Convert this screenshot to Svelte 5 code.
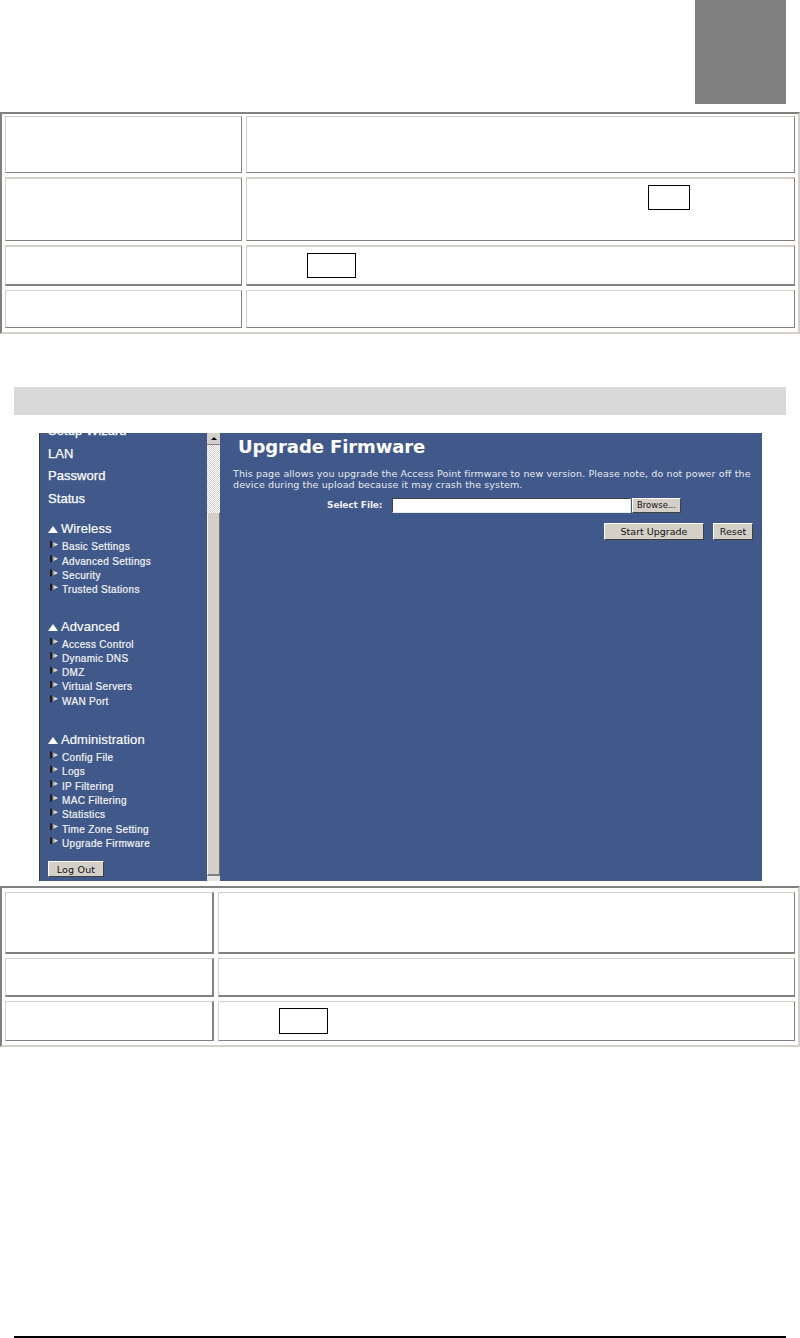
<script>
  const wireless = ['Basic Settings', 'Advanced Settings', 'Security', 'Trusted Stations'];
  const advanced = ['Access Control', 'Dynamic DNS', 'DMZ', 'Virtual Servers', 'WAN Port'];
  const admin = ['Config File', 'Logs', 'IP Filtering', 'MAC Filtering', 'Statistics', 'Time Zone Setting', 'Upgrade Firmware'];
</script>

<div class="page">
  <div class="tab-row"><div class="tab"></div></div>

  <div class="table t1">
    <div class="cell c-a r1"></div>
    <div class="cell r1"></div>
    <div class="cell c-a r2 thicktop"></div>
    <div class="cell r2 thicktop key-right"><span class="key k1"></span></div>
    <div class="cell c-a r3 thicktop thickbot"></div>
    <div class="cell r3 thicktop thickbot key-left"><span class="key k2"></span></div>
    <div class="cell c-a r4"></div>
    <div class="cell r4"></div>
  </div>

  <div class="band"></div>

  <div class="screen">
    <div class="side">
      <div class="side-inner">
        <div class="top">Setup Wizard</div>
        <div class="top">LAN</div>
        <div class="top">Password</div>
        <div class="top">Status</div>

        <div class="sec s-wireless"><span class="tri"></span>Wireless</div>
        {#each wireless as w}
          <div class="item"><span class="arrow"></span>{w}</div>
        {/each}

        <div class="sec s-advanced"><span class="tri"></span>Advanced</div>
        {#each advanced as w}
          <div class="item"><span class="arrow"></span>{w}</div>
        {/each}

        <div class="sec s-admin"><span class="tri"></span>Administration</div>
        {#each admin as w}
          <div class="item"><span class="arrow"></span>{w}</div>
        {/each}

        <button class="btn logout">Log Out</button>
      </div>
    </div>

    <div class="scroll">
      <div class="sb-btn"><span class="up"></span></div>
      <div class="sb-track"></div>
      <div class="sb-thumb"></div>
      <div class="sb-end"></div>
    </div>

    <div class="main">
      <h1>Upgrade Firmware</h1>
      <p>This page allows you upgrade the Access Point firmware to new version. Please note, do not power off the<br />device during the upload because it may crash the system.</p>
      <div class="file-row">
        <span class="label">Select File:</span>
        <span class="input"></span>
        <button class="btn browse">Browse...</button>
      </div>
      <div class="actions">
        <button class="btn start">Start Upgrade</button>
        <button class="btn reset">Reset</button>
      </div>
    </div>
  </div>

  <div class="table t2">
    <div class="cell c-b q1 thickbot"></div>
    <div class="cell q1 thickbot"></div>
    <div class="cell c-b q2 thickbot"></div>
    <div class="cell q2 thickbot"></div>
    <div class="cell c-b q3"></div>
    <div class="cell q3 key-left"><span class="key k3"></span></div>
  </div>

  <div class="rule"></div>
</div>

<style>
  :global(body) { margin: 0; background: #fff; }

  .page {
    width: 800px;
    height: 1338px;
    overflow: hidden;
    background: #fff;
    display: flex;
    flex-direction: column;
  }

  .tab-row { display: flex; justify-content: flex-end; padding-right: 14px; }
  .tab { width: 91px; height: 104px; background: #808080; }

  .table {
    box-sizing: border-box;
    width: 800px;
    display: grid;
    column-gap: 4px;
    row-gap: 4px;
    border-style: solid;
    border-width: 2px;
    border-color: #808080 #d4d0c8 #d4d0c8 #808080;
    padding: 2px 3px 2px 3px;
  }
  .t1 {
    height: 222px;
    margin-top: 8px;
    grid-template-columns: 237px 549px;
    grid-template-rows: 57px 64px 41px 38px;
  }
  .t2 {
    height: 161px;
    margin-top: 5px;
    padding-top: 4px;
    grid-template-columns: 209px 577px;
    grid-template-rows: 62px 39px 40px;
  }

  .cell {
    box-sizing: border-box;
    border: 1px solid;
    border-color: #d4d0c8 #808080 #808080 #d4d0c8;
    display: flex;
    align-items: center;
  }
  .c-b { border-right-width: 2px; }
  .thicktop { border-top-width: 2px; }
  .thickbot { border-bottom-width: 2px; }

  .key { display: block; box-sizing: border-box; border: 1px solid #000; }
  .key-right { padding-left: 401px; align-items: flex-start; padding-top: 6px; }
  .key-left { padding-left: 60px; }
  .k1 { width: 42px; height: 25px; }
  .k2 { width: 49px; height: 25px; }
  .k3 { width: 49px; height: 26px; }

  .band { height: 28px; margin: 53px 14px 18px; background: #d9d9d9; }

  .screen {
    width: 723px;
    height: 448px;
    margin-left: 39px;
    display: flex;
    background-color: #41598a;
    background-image: conic-gradient(#3d5687 25%, #445c8d 0 50%, #3d5687 0 75%, #445c8d 0);
    background-size: 2px 2px;
    border-left: 1px solid #3a3a3a;
    box-sizing: border-box;
    overflow: hidden;
    color: #fff;
  }

  .side { width: 167px; height: 448px; overflow: hidden; flex: none; box-sizing: border-box; padding-left: 8px; font-family: "Liberation Sans", Arial, sans-serif; }
  .side-inner { margin-top: -13px; }

  .top { height: 22.6px; line-height: 22.6px; font-size: 13px; font-weight: 400; letter-spacing: 0.05px; -webkit-text-stroke: 0.25px #fff; }

  .sec { height: 18px; line-height: 18px; margin-bottom: 2px; font-size: 13px; letter-spacing: 0.1px; display: flex; align-items: center; -webkit-text-stroke: 0.15px #fff; }
  .s-wireless { margin-top: 10px; }
  .s-advanced { margin-top: 20px; }
  .s-admin { margin-top: 22px; }
  .tri {
    width: 0; height: 0;
    border-left: 5px solid transparent;
    border-right: 5px solid transparent;
    border-bottom: 7px solid #fff;
    margin: 1px 3px 0 0;
  }

  .item {
    position: relative;
    height: 14.3px;
    line-height: 14.3px;
    padding-left: 14px;
    font-size: 10px;
    letter-spacing: 0.33px;
    color: #f4f4f4;
    -webkit-text-stroke: 0.2px #f4f4f4;
    white-space: nowrap;
  }
  .arrow {
    position: absolute;
    left: 2px;
    top: 0;
    width: 8px;
    height: 8px;
    background: linear-gradient(to right, #1c1c1c 0 2px, #9a9a9a 3px, #eeeeee 6px);
    clip-path: polygon(0 0, 100% 50%, 0 100%);
  }

  .btn {
    box-sizing: border-box;
    padding: 0;
    margin: 0;
    border: 1px solid;
    border-color: #fff #404040 #404040 #fff;
    background: #d4d0c8;
    color: #111;
    font-family: "DejaVu Sans", Verdana, sans-serif;
    font-size: 9px;
    text-align: center;
  }
  .logout { display: block; width: 56px; height: 16px; margin-top: 10px; font-size: 9.5px; letter-spacing: 0.2px; }

  .scroll { width: 13px; height: 448px; flex: none; display: flex; flex-direction: column; background: #d4d0c8; }
  .sb-btn {
    height: 12px; background: #d4d0c8; display: flex; align-items: center; justify-content: center;
    box-sizing: border-box; border-bottom: 1px solid #808080;
  }
  .up { width: 0; height: 0; border-left: 3px solid transparent; border-right: 3px solid transparent; border-bottom: 3px solid #000; }
  .sb-track {
    height: 68px;
    background-color: #eceae4;
    background-image: conic-gradient(#d4d0c8 25%, #fff 0 50%, #d4d0c8 0 75%, #fff 0);
    background-size: 2px 2px;
  }
  .sb-thumb {
    height: 363px;
    box-sizing: border-box;
    border-left: 1px solid #f4f3ef;
    border-right: 1px solid #707070;
    border-bottom: 2px solid #808080;
  }
  .sb-end { flex: 1; background: #e8e6e0; }

  .main { flex: 1; padding-left: 13px; font-family: "DejaVu Sans", Verdana, sans-serif; position: relative; min-width: 0; }

  h1 {
    margin: 3px 0 0 5px;
    height: 22px;
    line-height: 22px;
    font-size: 18px;
    font-weight: 700;
    letter-spacing: -0.1px;
    color: #fff;
  }
  p {
    margin: 10px 0 0 0;
    font-size: 9.5px;
    line-height: 11px;
    letter-spacing: 0.12px;
    color: #e6e9f0;
    white-space: nowrap;
  }
  .file-row { display: flex; align-items: center; margin-top: 7px; height: 16px; padding-left: 94px; }
  .label { width: 65px; font-size: 9px; font-weight: 700; color: #eef0f5; letter-spacing: -0.1px; }
  .input {
    box-sizing: border-box;
    width: 239px;
    height: 15px;
    background: #fff;
    border: 1px solid;
    border-color: #404040 #e8e8e8 #e8e8e8 #404040;
  }
  .browse { width: 49px; height: 15px; margin-left: 1px; font-size: 8.5px; }
  .actions { display: flex; margin-top: 10px; padding-left: 371px; }
  .start { width: 100px; height: 17px; font-size: 9.5px; }
  .reset { width: 40px; height: 17px; margin-left: 9px; font-size: 9.5px; }

  .rule { height: 2px; margin: auto 14px 0; background: #000; }
</style>
